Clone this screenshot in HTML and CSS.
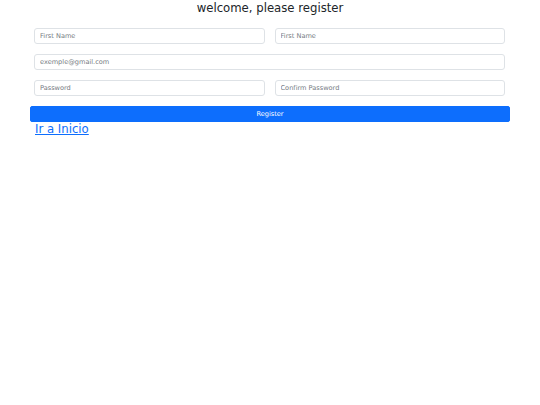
FILE: index.html
```html
<!DOCTYPE html>
<html lang="es">
<head>
<meta charset="utf-8">
<title>Register</title>
<link rel="stylesheet" href="styles.css">
</head>
<body>
  <h1 class="title">welcome, please register</h1>
  <div class="container">
    <form class="form">
      <div class="row two">
        <input class="field" type="text" placeholder="First Name">
        <input class="field" type="text" placeholder="First Name">
      </div>
      <div class="row">
        <input class="field" type="email" placeholder="exemple@gmail.com">
      </div>
      <div class="row two">
        <input class="field" type="password" placeholder="Password">
        <input class="field" type="password" placeholder="Confirm Password">
      </div>
      <button class="btn" type="button">Register</button>
    </form>
    <a class="home-link" href="#">Ir a Inicio</a>
  </div>
</body>
</html>
```
FILE: styles.css
```css
html, body {
  margin: 0;
  padding: 0;
  background: #ffffff;
  font-family: "DejaVu Sans", sans-serif;
  color: #212529;
}

.title {
  margin: 0;
  font-size: 11.7px;
  font-weight: 400;
  line-height: 16px;
  text-align: center;
  color: #212529;
}

.container {
  width: 480px;
  margin: 0 auto;
}

.form {
  display: flex;
  flex-direction: column;
  gap: 10px;
  padding-top: 12px;
}

.row {
  display: grid;
  grid-template-columns: 1fr;
  padding: 0 5px 0 4px;
}

.row.two {
  grid-template-columns: 1fr 1fr;
  column-gap: 10px;
}

.field {
  box-sizing: border-box;
  height: 16px;
  width: 100%;
  margin: 0;
  padding: 0 5px;
  border: 1px solid #dee2e6;
  border-radius: 3px;
  background: #fff;
  font-family: "DejaVu Sans", sans-serif;
  font-size: 6.6px;
  color: #212529;
  outline: none;
}

.field::placeholder {
  color: #757b82;
}

.btn {
  box-sizing: border-box;
  display: block;
  width: 100%;
  height: 16px;
  margin: 0;
  padding: 0;
  border: 1px solid #0d6efd;
  border-radius: 2px;
  background: #0d6efd;
  color: #ffffff;
  font-family: "DejaVu Sans", sans-serif;
  font-size: 6.6px;
  line-height: 14px;
  text-align: center;
}

.home-link {
  display: block;
  width: max-content;
  margin-left: 5px;
  font-size: 11.7px;
  line-height: 14px;
  color: #0d6efd;
  text-decoration: underline;
}
```
